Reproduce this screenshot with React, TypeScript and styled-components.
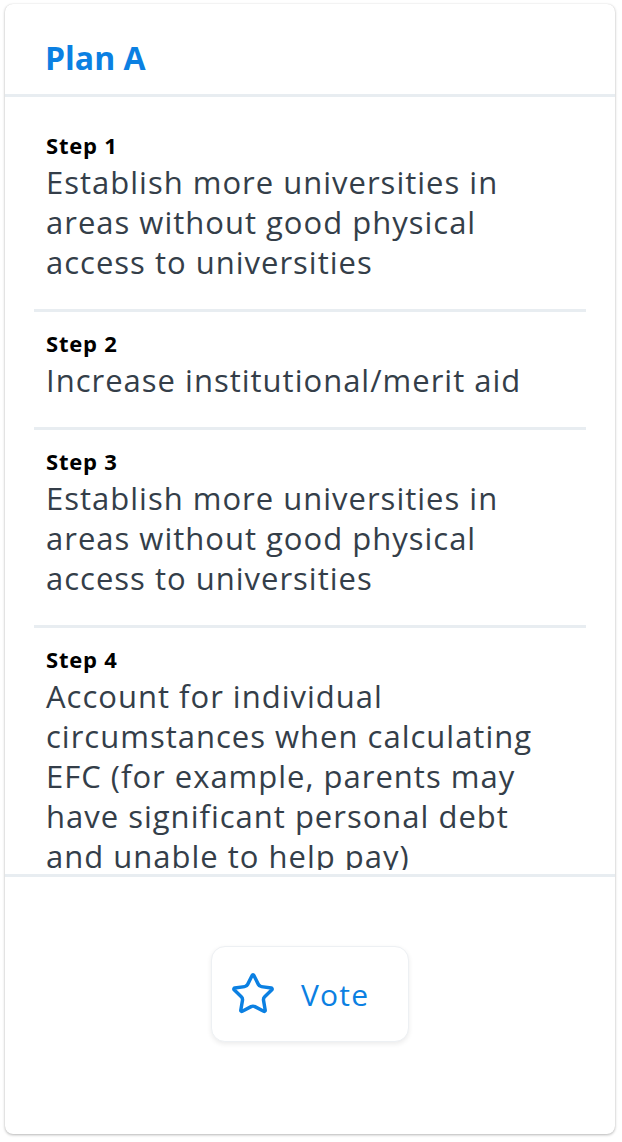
import React from "react";
import styled, { createGlobalStyle } from "styled-components";
import { Star } from "lucide-react";

const GlobalStyle = createGlobalStyle`
  html, body {
    margin: 0;
    padding: 0;
    background: #ffffff;
  }
  body {
    padding: 4px 7px 8px 5px;
    font-family: "Open Sans", "Noto Sans", sans-serif;
  }
  * { box-sizing: border-box; }
`;

const Card = styled.div`
  width: 610px;
  height: 1130px;
  background: #ffffff;
  border-radius: 8px;
  box-shadow: 0 1px 3px rgba(0, 0, 0, 0.28), 0 0 1px rgba(0, 0, 0, 0.12);
  display: flex;
  flex-direction: column;
  overflow: hidden;
`;

const Header = styled.header`
  height: 93px;
  padding: 32px 40px 0;
  border-bottom: 3px solid #e8edf1;
  flex: none;
`;

const Title = styled.h1`
  margin: 0;
  font-size: 32px;
  line-height: 44px;
  font-weight: 700;
  color: #0b80e2;
`;

const ListViewport = styled.div`
  flex: 1;
  min-height: 0;
  display: flex;
  flex-direction: column;
  padding-bottom: 4px;
  border-bottom: 3px solid #e8edf1;
`;

const StepList = styled.ol`
  list-style: none;
  margin: 0;
  padding: 17px 29px 0;
  flex: 1;
  min-height: 0;
  overflow: hidden;
`;

const StepItem = styled.li<{ $last?: boolean }>`
  padding: 16px 30px 27px 12px;
  border-bottom: ${(p) => (p.$last ? "none" : "3px solid #e8edf1")};
`;

const StepLabel = styled.div`
  font-size: 22px;
  line-height: 30px;
  font-weight: 700;
  letter-spacing: 0.8px;
  color: #000000;
`;

const StepText = styled.p`
  margin: 2px 0 0;
  font-size: 31px;
  line-height: 40px;
  font-weight: 500;
  letter-spacing: 1px;
  color: #343e49;
`;

const Footer = styled.footer`
  flex: none;
  height: 257px;
  padding-top: 69px;
  display: flex;
  justify-content: center;
  align-items: flex-start;
`;

const VoteButton = styled.button`
  width: 198px;
  height: 96px;
  padding: 0 0 0 18px;
  display: flex;
  align-items: center;
  gap: 25px;
  background: #ffffff;
  border: 1px solid #edf0f3;
  border-radius: 14px;
  box-shadow: 0 2px 5px rgba(0, 0, 0, 0.08);
  font-family: "Open Sans", "Noto Sans", sans-serif;
  font-size: 30px;
  font-weight: 500;
  letter-spacing: 1.2px;
  color: #0b80e2;
  cursor: pointer;
`;

const steps = [
  "Establish more universities in areas without good physical access to universities",
  "Increase institutional/merit aid",
  "Establish more universities in areas without good physical access to universities",
  "Account for individual circumstances when calculating EFC (for example, parents may have significant personal debt and unable to help pay)",
];

export default function App() {
  return (
    <>
      <GlobalStyle />
      <Card>
        <Header>
          <Title>Plan A</Title>
        </Header>
        <ListViewport>
          <StepList>
            {steps.map((s, i) => (
              <StepItem key={i} $last={i === steps.length - 1}>
                <StepLabel>Step {i + 1}</StepLabel>
                <StepText>{s}</StepText>
              </StepItem>
            ))}
          </StepList>
        </ListViewport>
        <Footer>
          <VoteButton>
            <Star size={46} strokeWidth={1.8} color="#0b80e2" />
            <span>Vote</span>
          </VoteButton>
        </Footer>
      </Card>
    </>
  );
}
